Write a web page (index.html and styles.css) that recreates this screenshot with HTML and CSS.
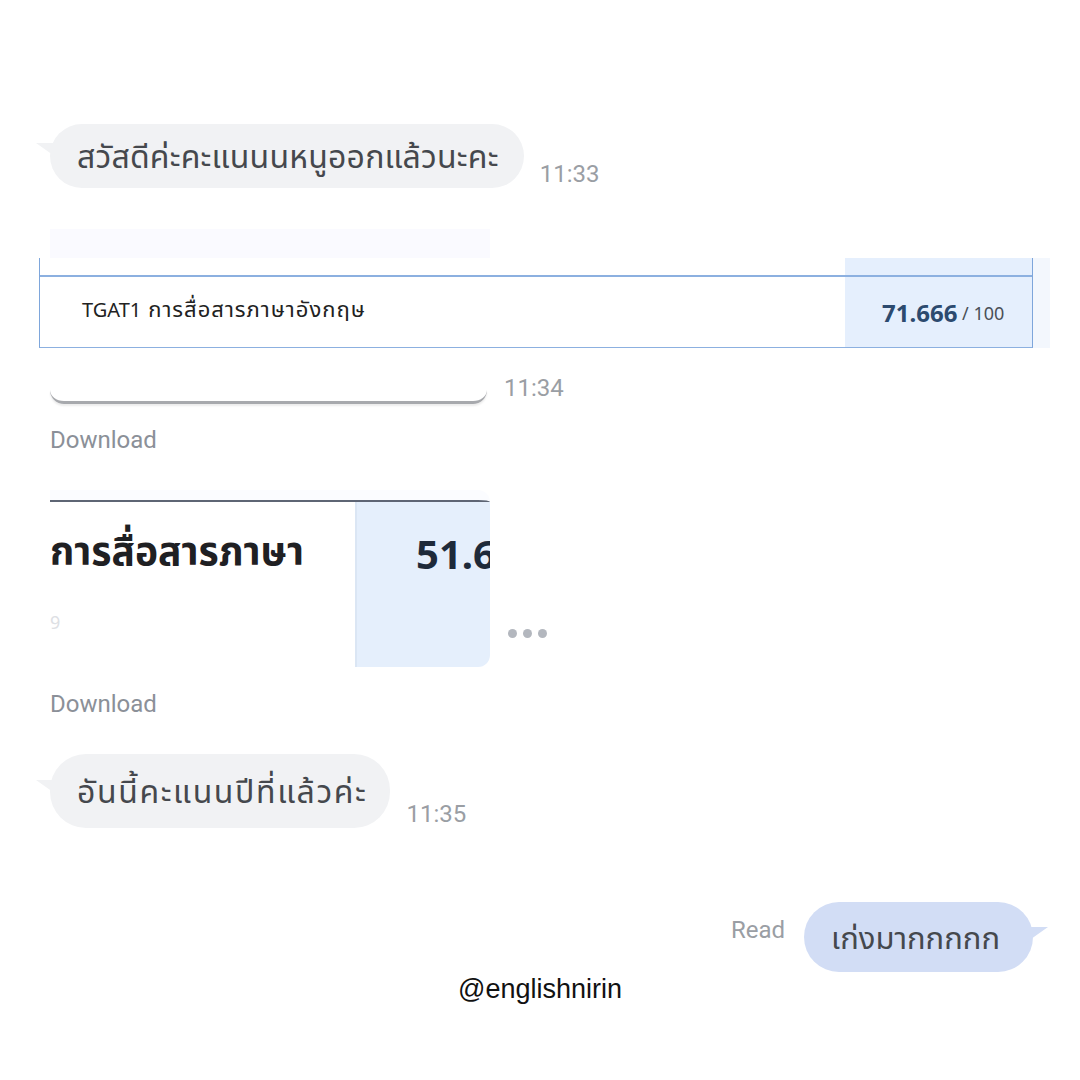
FILE: index.html
```html
<!DOCTYPE html>
<html lang="th">
<head>
<meta charset="utf-8">
<link rel="stylesheet" href="styles.css">
</head>
<body>
<div class="chat">
  <div class="row row1">
    <div class="bubble in b1">สวัสดีค่ะคะแนนนหนูออกแล้วนะคะ</div>
    <span class="time t1">11:33</span>
  </div>

  <div class="shot1">
    <div class="strip"></div>
    <div class="table">
      <div class="tcell-left">
        <div class="tline"></div>
        <div class="subject">TGAT1 <span class="th">การสื่อสารภาษาอังกฤษ</span></div>
      </div>
      <div class="tcell-right">
        <div class="tline"></div>
        <div class="score"><b>71.666</b> / 100</div>
      </div>
      <div class="tedge"></div>
    </div>
    <div class="row row-bottom">
      <div class="bubble-bottom"></div>
      <span class="time t2">11:34</span>
    </div>
  </div>

  <div class="download d1">Download</div>

  <div class="row row2">
    <div class="shot2">
      <div class="s2-left">
        <div class="s2-title">การสื่อสารภาษา</div>
        <div class="s2-sub">9</div>
      </div>
      <div class="s2-right">
        <div class="s2-score">51.6</div>
      </div>
    </div>
    <div class="dots"><i></i><i></i><i></i></div>
  </div>

  <div class="download d2">Download</div>

  <div class="row row3">
    <div class="bubble in b3">อันนี้คะแนนปีที่แล้วค่ะ</div>
    <span class="time t3">11:35</span>
  </div>

  <div class="row row4">
    <span class="read">Read</span>
    <div class="bubble out b4">เก่งมากกกกก</div>
  </div>

  <div class="handle">@englishnirin</div>
</div>
</body>
</html>
```
FILE: styles.css
```css
* { box-sizing: border-box; }
html, body { margin: 0; padding: 0; background: #fff; }
body {
  width: 1080px;
  height: 1080px;
  overflow: hidden;
  font-family: "Noto Sans", "Noto Sans Thai", sans-serif;
  color: #3f4247;
}
.chat {
  padding: 124px 0 0 50px;
  display: flex;
  flex-direction: column;
}
.row { display: flex; align-items: flex-end; }
.bubble {
  position: relative;
  font-size: 32px;
  line-height: 1;
  display: flex;
  align-items: center;
  border-radius: 36px;
  padding: 0 25px 0 27px;
  color: #45484d;
  white-space: nowrap;
}
.bubble.in { background: #f1f2f4; }
.bubble.in::before {
  content: "";
  position: absolute;
  left: -14px;
  top: 19px;
  width: 0; height: 0;
  border-right: 24px solid #f1f2f4;
  border-bottom: 17px solid transparent;
}
.bubble.out { background: #d2ddf5; }
.bubble.out::after {
  content: "";
  position: absolute;
  right: -15px;
  top: 25px;
  width: 0; height: 0;
  border-left: 24px solid #d2ddf5;
  border-bottom: 17px solid transparent;
}
.b1 { height: 64px; letter-spacing: 0.2px; }
.b3 { height: 74px; letter-spacing: 1.6px; padding-right: 23px; }
.b3::before { top: 26px !important; }
.b4 { height: 70px; font-size: 31px; padding: 0 33px 0 27px; }
.time {
  font-family: "Roboto", "Liberation Sans", sans-serif;
  font-size: 24px;
  line-height: 1;
  color: #9a9ea4;
}
.t1 { margin-left: 16px; margin-bottom: 2px; }
.t3 { margin-left: 16px; margin-bottom: 2px; }

.shot1 { margin-top: 41px; margin-left: -11px; }
.strip {
  margin-left: 11px;
  width: 440px;
  height: 29px;
  background: #fafaff;
}
.table {
  display: flex;
  height: 90px;
}
.tcell-left {
  width: 806px;
  border-left: 1.5px solid #7ea6db;
  border-bottom: 1.5px solid #8cb0e0;
  display: flex;
  flex-direction: column;
}
.tline {
  margin-top: 17px;
  height: 1.5px;
  background: #8cb0e0;
}
.subject {
  flex: 1;
  display: flex;
  align-items: center;
  gap: 7px;
  padding-left: 42px;
  font-size: 20px;
  color: #222;
  padding-bottom: 4px;
  white-space: nowrap;
}
.subject .th { font-size: 22px; letter-spacing: 1px; }
.tcell-right {
  width: 188px;
  background: #e5effd;
  border-right: 1.5px solid #7ea6db;
  border-bottom: 1.5px solid #8cb0e0;
  display: flex;
  flex-direction: column;
}
.score {
  flex: 1;
  display: flex;
  align-items: center;
  padding-left: 37px;
  padding-top: 2px;
  font-size: 18px;
  color: #4a4f57;
  white-space: pre;
}
.score b {
  font-size: 24px;
  color: #2c4a6f;
  font-weight: 700;
}
.tedge { width: 17px; background: #f3f7fd; }

.row-bottom { margin-left: 11px; margin-top: 52px; align-items: flex-start; }
.bubble-bottom {
  width: 437px;
  height: 14px;
  border-radius: 0 0 14px 14px;
  border-bottom: 3px solid #a7a9ad;
  box-shadow: 0 2px 2px rgba(0,0,0,0.08);
  margin-top: -10px;
}
.t2 { margin-left: 17px; margin-top: -24px; }

.download {
  font-family: "Roboto", "Liberation Sans", sans-serif;
  font-size: 24px;
  line-height: 28px;
  color: #8b9098;
}
.d1 { margin-top: 22px; }
.d2 { margin-top: 23px; }

.row2 { margin-top: 36px; align-items: flex-end; }
.shot2 {
  width: 440px;
  height: 177px;
  border-radius: 0 12px 12px 0;
  overflow: hidden;
  display: flex;
  border-top: 10px solid #fbfcff;
  position: relative;
}
.shot2::before {
  content: "";
  position: absolute;
  left: 0; right: 0; top: 0;
  height: 2px;
  background: #5e6574;
}
.s2-left {
  width: 305px;
  background: #fff;
  display: flex;
  flex-direction: column;
}
.s2-title {
  margin-top: 27px;
  font-size: 39px;
  font-weight: 700;
  color: #1f2023;
  white-space: nowrap;
  line-height: 1.2;
}
.s2-sub {
  margin-top: 36px;
  font-size: 18px;
  color: #dde0e4;
}
.s2-right {
  flex: 1;
  background: #e5effc;
  border-left: 2px solid #dbe6f4;
  overflow: hidden;
}
.s2-score {
  margin-top: 26px;
  margin-left: 59px;
  font-size: 40px;
  font-weight: 700;
  color: #1e2a3a;
  white-space: nowrap;
  font-family: "Noto Sans", "Open Sans", sans-serif;
}
.dots {
  display: flex;
  gap: 6px;
  margin-left: 18px;
  margin-bottom: 29px;
}
.dots i {
  width: 9px; height: 9px;
  border-radius: 50%;
  background: #b3b7be;
}

.row3 { margin-top: 36px; }
.row4 {
  margin-top: 74px;
  justify-content: flex-end;
  padding-right: 47px;
  align-items: flex-start;
}
.read {
  font-family: "Roboto", "Liberation Sans", sans-serif;
  font-size: 24px;
  color: #9a9ea4;
  margin-right: 19px;
  margin-top: 14px;
}
.handle {
  margin-left: -50px;
  text-align: center;
  font-family: "Liberation Sans", Arial, sans-serif;
  font-size: 27px;
  color: #111;
  margin-top: 2px;
}
```
